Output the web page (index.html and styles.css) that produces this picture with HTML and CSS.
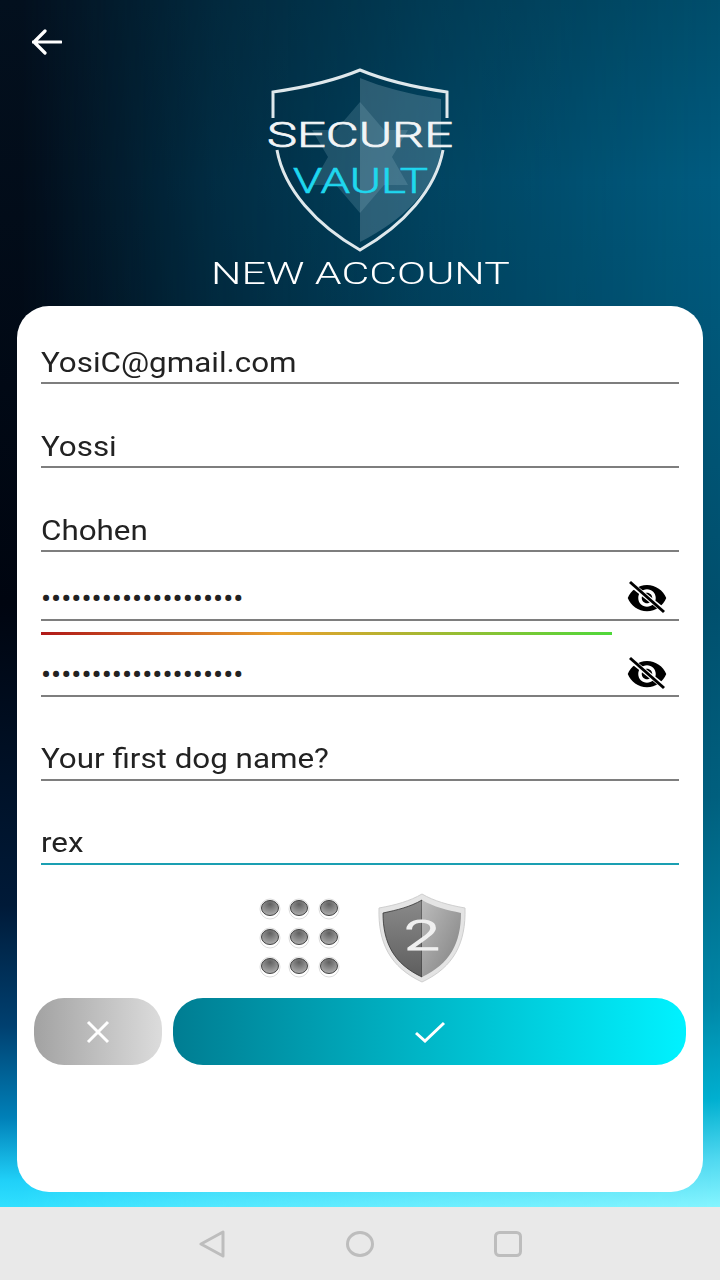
FILE: index.html
```html
<!DOCTYPE html>
<html lang="en">
<head>
    <meta charset="UTF-8">
    <meta name="viewport" content="width=device-width, initial-scale=1.0">
    <title>New Account</title>
    <link rel="stylesheet" href="styles.css">
</head>
<body>
    <svg class="defs" width="0" height="0">
        <defs>
            <radialGradient id="dotFill" cx="50%" cy="25%" r="80%">
                <stop offset="0" stop-color="#606060"/>
                <stop offset="1" stop-color="#b4b4b4"/>
            </radialGradient>
            <symbol id="eyeOff" viewBox="0 0 42 42">
                <g transform="scale(1.75)">
                    <path d="M12 4.5C7 4.5 2.73 7.61 1 12c1.73 4.39 6 7.5 11 7.5s9.27-3.11 11-7.5c-1.73-4.39-6-7.5-11-7.5zM12 17c-2.76 0-5-2.24-5-5s2.24-5 5-5 5 2.24 5 5-2.24 5-5 5zm0-8c-1.66 0-3 1.34-3 3s1.34 3 3 3 3-1.34 3-3-1.34-3-3-3z" fill="#000"/>
                </g>
                <path d="M6 8 L37 33" stroke="#fff" stroke-width="5"/>
                <path d="M4 5 L38 35" stroke="#000" stroke-width="3"/>
            </symbol>
        </defs>
    </svg>

    <div class="screen">
        <header class="top">
            <button class="back" aria-label="Back">
                <svg width="30" height="26" viewBox="0 0 30 26">
                    <path d="M1 13 H29 M13 2 L2 13 L13 24" fill="none" stroke="#fff" stroke-width="3.2" stroke-linecap="round" stroke-linejoin="round"/>
                </svg>
            </button>
            <div class="brand">
                <svg class="logo" width="200" height="190" viewBox="0 0 200 190">
                    <path d="M100 11 C122 20 148 27 181 32 L181 83 C176 122 142 154 100 175 Z" fill="#b9d3de" fill-opacity=".24"/>
                    <path d="M100 35 L124 63 L148 63 L132 90 L148 118 L124 118 L100 146 L76 118 L52 118 L68 90 L52 63 L76 63 Z" fill="#9cc4d4" fill-opacity=".2"/>
                    <path d="M13 51 L13 25 C48 20 76 13 100 3 C124 13 152 20 187 25 L187 51 M17 83 C24 122 56 158 100 183 C144 158 176 122 183 83" fill="none" stroke="#dfe8ec" stroke-width="3"/>
                    <text class="logo-secure" x="7" y="80" textLength="186" lengthAdjust="spacingAndGlyphs">SECURE</text>
                    <text class="logo-vault" x="33" y="126" textLength="135" lengthAdjust="spacingAndGlyphs">VAULT</text>
                </svg>
                <h1 class="title">NEW ACCOUNT</h1>
            </div>
        </header>

        <main class="card">
            <div class="fields">
                <div class="field"><span class="value">YosiC@gmail.com</span></div>
                <div class="field"><span class="value">Yossi</span></div>
                <div class="field"><span class="value">Chohen</span></div>
                <div class="field pw-first">
                    <span class="dots">••••••••••••••••••••</span>
                    <svg class="eye" width="42" height="42"><use href="#eyeOff"/></svg>
                </div>
                <div class="strength"><div class="strength-fill" style="width: 571px"></div></div>
                <div class="field pw-second">
                    <span class="dots">••••••••••••••••••••</span>
                    <svg class="eye" width="42" height="42"><use href="#eyeOff"/></svg>
                </div>
                <div class="field field-low"><span class="value">Your first dog name?</span></div>
                <div class="field field-low field-active"><span class="value">rex</span></div>
            </div>

            <div class="extras">
                <svg class="grid-icon" width="84" height="84" viewBox="0 0 84 84">
                    <g id="dotRow">
                        <g><circle cx="12" cy="13" r="10" fill="#fff" stroke="#ddd"/><ellipse cx="12" cy="12" rx="8.5" ry="7.5" fill="url(#dotFill)" stroke="#444"/></g>
                        <g><circle cx="41" cy="13" r="10" fill="#fff" stroke="#ddd"/><ellipse cx="41" cy="12" rx="8.5" ry="7.5" fill="url(#dotFill)" stroke="#444"/></g>
                        <g><circle cx="71" cy="13" r="10" fill="#fff" stroke="#ddd"/><ellipse cx="71" cy="12" rx="8.5" ry="7.5" fill="url(#dotFill)" stroke="#444"/></g>
                    </g>
                    <use href="#dotRow" y="29"/>
                    <use href="#dotRow" y="58"/>
                </svg>
                <svg class="shield-icon" width="90" height="90" viewBox="0 0 90 90">
                    <defs>
                        <linearGradient id="shieldLeft" x1="0" y1="0" x2="0" y2="1">
                            <stop offset="0" stop-color="#8a8a8a"/>
                            <stop offset="1" stop-color="#5e5e5e"/>
                        </linearGradient>
                        <linearGradient id="shieldRight" x1="0" y1="0" x2="1" y2="1">
                            <stop offset="0" stop-color="#bcbcbc"/>
                            <stop offset="1" stop-color="#808080"/>
                        </linearGradient>
                    </defs>
                    <path d="M44 1 C56 8 70 12 87 15 C88 50 76 74 44 89 C12 74 0 50 1 15 C18 12 32 8 44 1 Z" fill="#e4e4e4" stroke="#cfcfcf"/>
                    <path d="M44 7 C32 14 19 17 5 20 C5 50 16 71 44 84 Z" fill="url(#shieldLeft)" stroke="#333" stroke-width=".8"/>
                    <path d="M44 7 C56 14 69 17 83 20 C83 50 72 71 44 84 Z" fill="url(#shieldRight)"/>
                    <text class="shield-two" x="26" y="57" textLength="36" lengthAdjust="spacingAndGlyphs">2</text>
                </svg>
            </div>

            <div class="actions">
                <button class="btn btn-cancel" aria-label="Cancel">
                    <svg width="26" height="24" viewBox="0 0 26 24"><path d="M3 2 L23 22 M23 2 L3 22" stroke="#fff" stroke-width="3" fill="none"/></svg>
                </button>
                <button class="btn btn-ok" aria-label="Confirm">
                    <svg width="32" height="22" viewBox="0 0 32 22"><path d="M2 12 L11 20 L30 2" stroke="#fff" stroke-width="3" fill="none"/></svg>
                </button>
            </div>
        </main>
    </div>

    <nav class="navbar">
        <svg width="28" height="28" viewBox="0 0 28 28"><path d="M25 2 L25 26 L3 14 Z" fill="none" stroke="#bdbdbd" stroke-width="3" stroke-linejoin="round"/></svg>
        <svg width="28" height="26" viewBox="0 0 28 26"><ellipse cx="14" cy="13" rx="12.5" ry="11.5" fill="none" stroke="#bdbdbd" stroke-width="3"/></svg>
        <svg width="28" height="26" viewBox="0 0 28 26"><rect x="1.5" y="1.5" width="25" height="23" rx="4" fill="none" stroke="#bdbdbd" stroke-width="3"/></svg>
    </nav>
</body>
</html>
```

FILE: styles.css
```css
* {
    box-sizing: border-box;
}

html, body {
    margin: 0;
    padding: 0;
}

body {
    width: 720px;
    height: 1280px;
    overflow: hidden;
    font-family: Roboto, "Liberation Sans", sans-serif;
    background-color: #e9e9e9;
}

.defs {
    position: absolute;
}

.screen {
    position: relative;
    isolation: isolate;
    height: 1207px;
    display: flex;
    flex-direction: column;
    background: linear-gradient(to bottom, #004e6c 0%, #005c80 15%, #00506e 50%, #00607f 66%, #0088a8 83%, #00b0d0 91%, #50d8f0 96%, #85f5ff 100%);
}

/* dark side of the backdrop, fades out towards the right */
.screen::before {
    content: "";
    position: absolute;
    inset: 0;
    z-index: -1;
    background: linear-gradient(to bottom, #03101e 0%, #000510 50%, #001a38 75%, #004070 85%, #0080b8 92.6%, #20d0f8 97.8%, #30e0ff 100%);
    -webkit-mask-image: linear-gradient(to right, #000 3%, rgba(0, 0, 0, .6) 30%, rgba(0, 0, 0, .3) 60%, transparent 100%);
    mask-image: linear-gradient(to right, #000 3%, rgba(0, 0, 0, .6) 30%, rgba(0, 0, 0, .3) 60%, transparent 100%);
}

.top {
    height: 306px;
    display: grid;
    grid-template-columns: 1fr auto 1fr;
}

.back {
    justify-self: start;
    align-self: start;
    margin: 29px 0 0 32px;
    padding: 0;
    border: none;
    background: none;
    line-height: 0;
}

.brand {
    display: flex;
    flex-direction: column;
    align-items: center;
    padding-top: 67px;
}

.logo {
    display: block;
}

.logo text {
    font-family: Roboto, "Liberation Sans", sans-serif;
}

.logo-secure {
    font-size: 35px;
    font-weight: 300;
    fill: #f2f5f7;
    stroke: #f2f5f7;
    stroke-width: .7;
}

.logo-vault {
    font-size: 35px;
    font-weight: 300;
    fill: #1fd7ef;
    stroke: #1fd7ef;
    stroke-width: .6;
}

.title {
    margin: -2px 0 0;
    font-size: 32px;
    font-weight: 300;
    line-height: 36px;
    white-space: nowrap;
    color: #fff;
    transform: scaleX(1.34);
}

.card {
    height: 886px;
    margin: 0 17px;
    padding: 24px 17px 0;
    background: #fff;
    border-radius: 32px;
}

.fields {
    padding: 0 7px;
}

.field {
    height: 54px;
    margin-bottom: 30px;
    padding-bottom: 1px;
    display: flex;
    align-items: flex-end;
    justify-content: space-between;
    border-bottom: 2px solid #7e7e7e;
    font-size: 28px;
    line-height: 36px;
    color: #222;
}

.field:last-child {
    margin-bottom: 0;
}

.field-low {
    padding-bottom: 2px;
}

/* the capture is a little stretched sideways */
.value {
    display: inline-block;
    transform: scaleX(1.12);
    transform-origin: left center;
}

.pw-first {
    margin-top: -15px;
    margin-bottom: 11px;
}

.pw-second {
    height: 62px;
}

.field-active {
    border-bottom-color: #1a9fb2;
}

.dots {
    font-size: 30px;
    line-height: 36px;
    margin-bottom: 1px;
}

.eye {
    margin: 0 11px -1px 0;
}

.strength {
    height: 3px;
}

.strength-fill {
    height: 100%;
    background: linear-gradient(to right, #b01818 0%, #e8a02c 42%, #4fd83a 100%);
}

.extras {
    height: 90px;
    margin-top: 28px;
    padding-left: 6px;
    display: flex;
    justify-content: center;
    align-items: center;
    gap: 36px;
}

.shield-two {
    font-family: Roboto, "Liberation Sans", sans-serif;
    font-size: 42px;
    font-weight: 300;
    fill: #f0f0f0;
    stroke: #f0f0f0;
    stroke-width: 1.2;
}

.actions {
    margin-top: 15px;
    display: flex;
    gap: 11px;
}

.btn {
    height: 67px;
    padding: 0;
    border: none;
    border-radius: 30px;
    display: flex;
    align-items: center;
    justify-content: center;
}

.btn-cancel {
    width: 128px;
    background: linear-gradient(to right, #a2a2a2, #dcdcdc);
}

.btn-ok {
    flex: 1;
    background: linear-gradient(to right, #007d92, #00f2ff);
}

.navbar {
    height: 73px;
    padding: 0 198px;
    display: flex;
    align-items: center;
    justify-content: space-between;
    background: #e9e9e9;
}
```
